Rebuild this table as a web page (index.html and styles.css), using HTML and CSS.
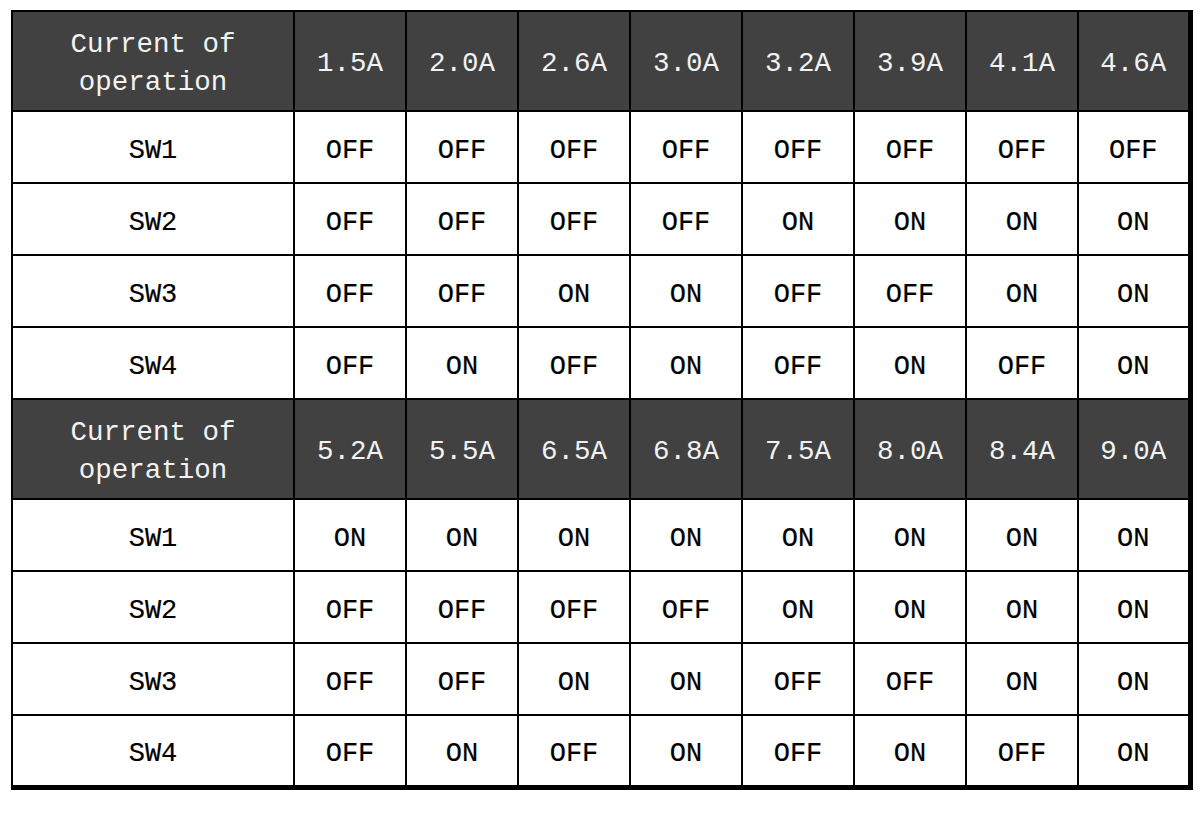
FILE: index.html
```html
<!DOCTYPE html>
<html>
<head>
<meta charset="utf-8">
<link rel="stylesheet" href="styles.css">
</head>
<body>
<table class="grid">
<colgroup><col class="c-label"><col span="8" class="c-val"></colgroup>
<tbody>
<tr class="head"><th>Current of<br>operation</th><th>1.5A</th><th>2.0A</th><th>2.6A</th><th>3.0A</th><th>3.2A</th><th>3.9A</th><th>4.1A</th><th>4.6A</th></tr>
<tr><td>SW1</td><td>OFF</td><td>OFF</td><td>OFF</td><td>OFF</td><td>OFF</td><td>OFF</td><td>OFF</td><td>OFF</td></tr>
<tr><td>SW2</td><td>OFF</td><td>OFF</td><td>OFF</td><td>OFF</td><td>ON</td><td>ON</td><td>ON</td><td>ON</td></tr>
<tr><td>SW3</td><td>OFF</td><td>OFF</td><td>ON</td><td>ON</td><td>OFF</td><td>OFF</td><td>ON</td><td>ON</td></tr>
<tr><td>SW4</td><td>OFF</td><td>ON</td><td>OFF</td><td>ON</td><td>OFF</td><td>ON</td><td>OFF</td><td>ON</td></tr>
<tr class="head"><th>Current of<br>operation</th><th>5.2A</th><th>5.5A</th><th>6.5A</th><th>6.8A</th><th>7.5A</th><th>8.0A</th><th>8.4A</th><th>9.0A</th></tr>
<tr><td>SW1</td><td>ON</td><td>ON</td><td>ON</td><td>ON</td><td>ON</td><td>ON</td><td>ON</td><td>ON</td></tr>
<tr><td>SW2</td><td>OFF</td><td>OFF</td><td>OFF</td><td>OFF</td><td>ON</td><td>ON</td><td>ON</td><td>ON</td></tr>
<tr><td>SW3</td><td>OFF</td><td>OFF</td><td>ON</td><td>ON</td><td>OFF</td><td>OFF</td><td>ON</td><td>ON</td></tr>
<tr><td>SW4</td><td>OFF</td><td>ON</td><td>OFF</td><td>ON</td><td>OFF</td><td>ON</td><td>OFF</td><td>ON</td></tr>
</tbody>
</table>
</body>
</html>
```

FILE: styles.css
```css
html, body {
  margin: 0;
  padding: 0;
  background: #ffffff;
}
body {
  padding: 10px 0 0 11px;
}
.grid {
  border-collapse: collapse;
  table-layout: fixed;
  width: 1177px;
  font-family: "Liberation Mono", "DejaVu Sans Mono", monospace;
  border-top: 2px solid #000;
  border-left: 2px solid #000;
  border-right: 5px solid #000;
  border-bottom: 5px solid #000;
}
.c-label { width: 282px; }
.c-val { width: 112px; }
.grid th, .grid td {
  border: 2px solid #000;
  text-align: center;
  vertical-align: middle;
  padding: 0;
  font-weight: normal;
  box-sizing: border-box;
}
.grid td {
  height: 72px;
  padding-top: 8px;
  font-size: 27px;
  color: #000;
  -webkit-text-stroke: 0.2px #000;
}
.head th {
  height: 100px;
  padding-top: 6px;
  background: #414141;
  color: #f2f2f2;
  font-size: 27.5px;
  line-height: 38px;
}
```
